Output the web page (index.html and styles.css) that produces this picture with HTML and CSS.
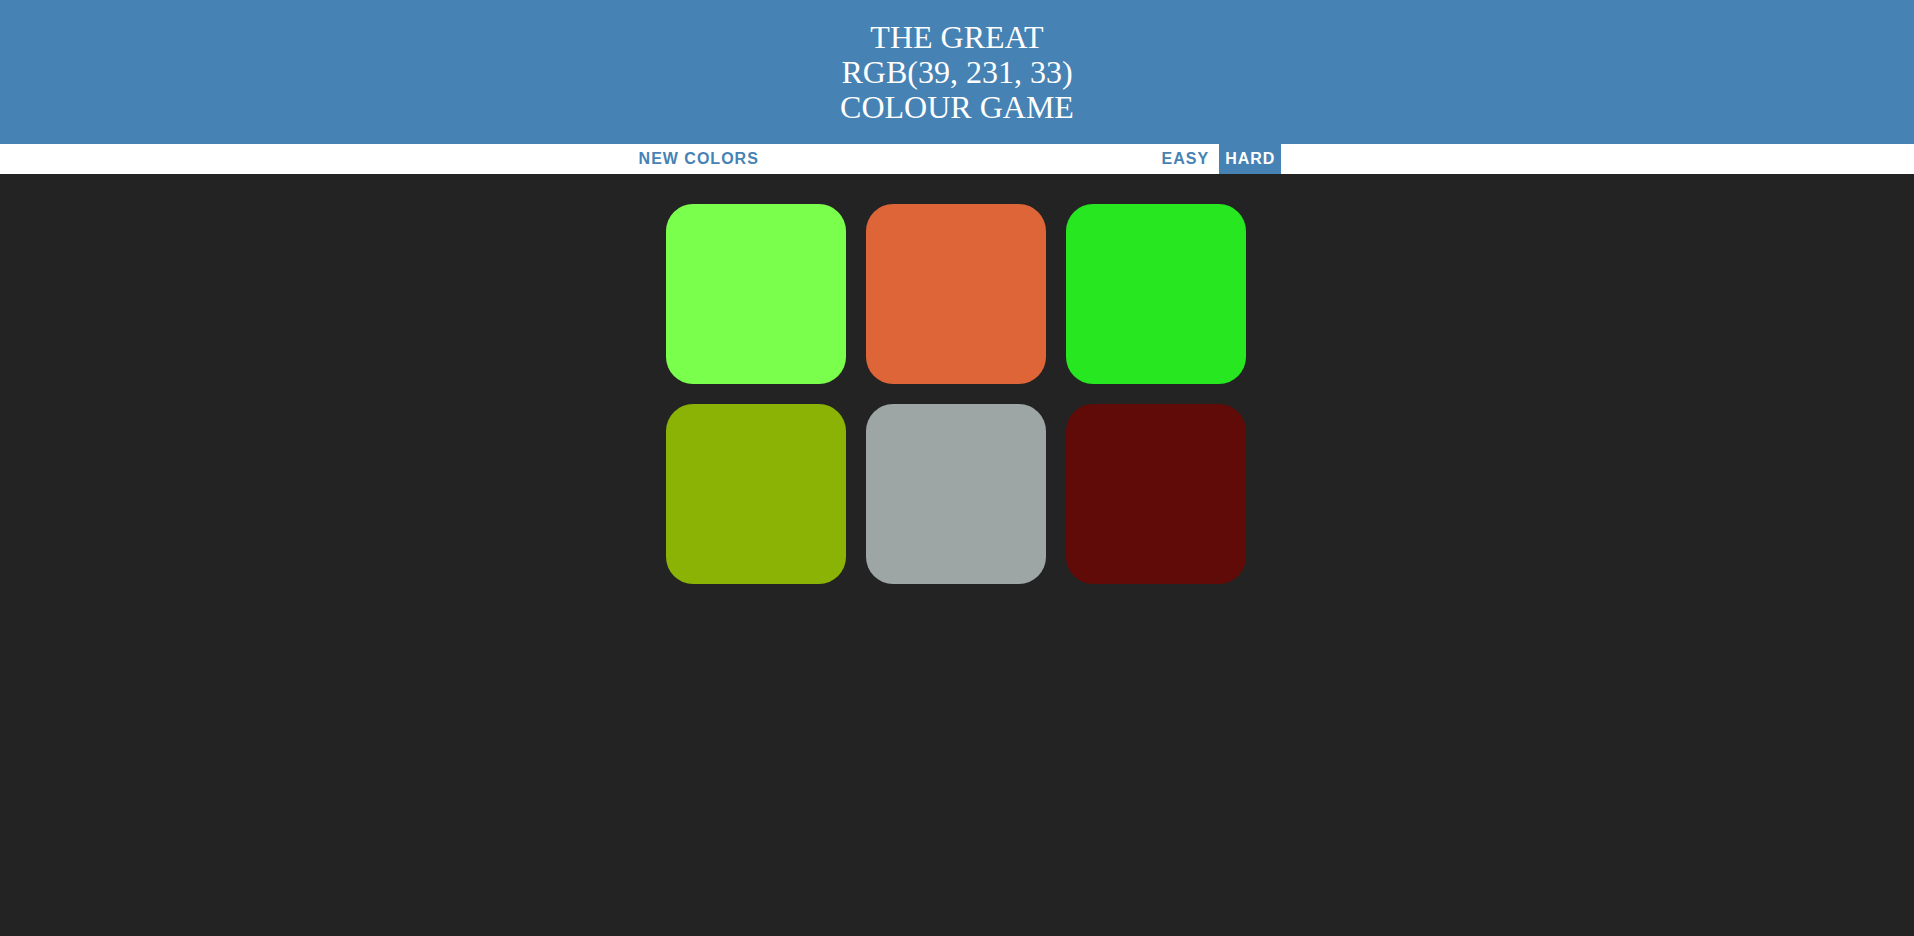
FILE: index.html
```html
<!DOCTYPE html>
<html>
<head>
<meta charset="utf-8">
<title>Colour Game</title>
<link rel="stylesheet" href="styles.css">
</head>
<body>
<h1 class="title">The Great<br><span class="rgb">RGB(39, 231, 33)</span><br>Colour Game</h1>
<div class="stripe">
  <button class="btn">New Colors</button>
  <span class="message"></span>
  <button class="btn">Easy</button>
  <button class="btn selected">Hard</button>
</div>
<div class="board">
  <div class="square" style="background: rgb(123, 255, 77);"></div>
  <div class="square" style="background: rgb(222, 101, 56);"></div>
  <div class="square" style="background: rgb(39, 231, 33);"></div>
  <div class="square" style="background: rgb(138, 179, 5);"></div>
  <div class="square" style="background: rgb(158, 166, 165);"></div>
  <div class="square" style="background: rgb(96, 11, 7);"></div>
</div>
</body>
</html>
```
FILE: styles.css
```css
html, body {
  margin: 0;
  padding: 0;
}
body {
  background: #232323;
  font-family: "Liberation Sans", Arial, sans-serif;
}
.title {
  margin: 0;
  padding: 20px 0 18.5px;
  background: #4682b4;
  color: #fff;
  font-family: "Liberation Serif", "Times New Roman", serif;
  font-weight: normal;
  font-size: 32px;
  line-height: 1.1;
  text-align: center;
  text-transform: uppercase;
}
.stripe {
  height: 30px;
  background: #fff;
  display: flex;
  justify-content: center;
  gap: 4px;
}
.btn {
  border: none;
  background: none;
  margin: 0;
  padding: 0 6px;
  height: 100%;
  font-family: "Liberation Sans", Arial, sans-serif;
  font-size: 16px;
  font-weight: 700;
  letter-spacing: 1px;
  text-transform: uppercase;
  color: #4682b4;
  cursor: pointer;
}
.btn.selected {
  background: #4682b4;
  color: #fff;
}
.message {
  width: 20%;
}
.board {
  width: 582px;
  margin: 30px auto 0;
  display: grid;
  grid-template-columns: repeat(3, 180px);
  gap: 20px;
}
.square {
  height: 180px;
  border-radius: 27px;
}
```
